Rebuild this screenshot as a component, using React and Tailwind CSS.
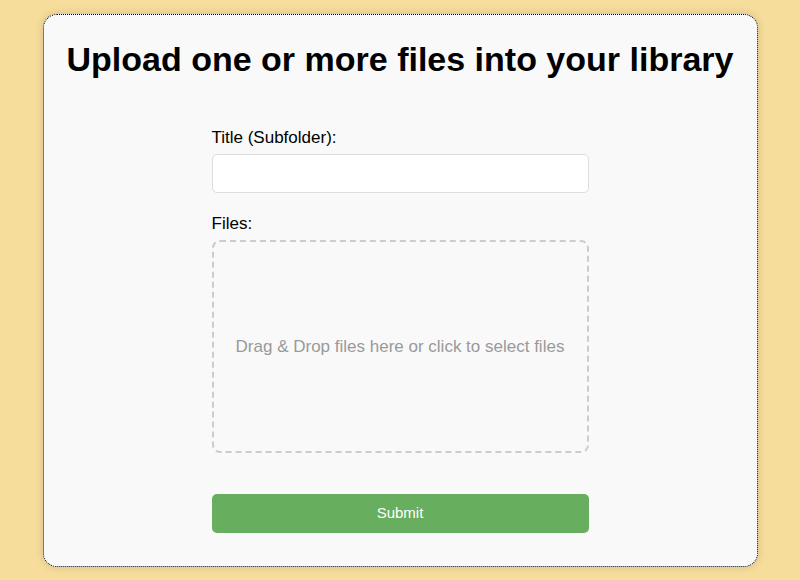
export default function App() {
  return (
    <div className="min-h-screen bg-[#f6dd9c] pt-[14px] font-['Liberation_Sans',Arial,sans-serif]">
      <div className="mx-auto w-[715px] h-[553px] rounded-[14px] border border-dotted border-black bg-[#f9f9f9] shadow-[0_0_8px_rgba(0,0,0,0.15)]">
        <h1 className="pt-[24px] text-center text-[34px] font-bold leading-[40px] text-black">
          Upload one or more files into your library
        </h1>

        <form className="mx-auto mt-[49px] w-[377px]" onSubmit={e => e.preventDefault()}>
          <label className="block text-[17px] leading-[20px] text-black">Title (Subfolder):</label>
          <input
            type="text"
            className="mt-[6px] block h-[39px] w-full rounded-[5px] border border-[#ddd] bg-white px-2 outline-none"
          />

          <label className="mt-[21px] block text-[17px] leading-[20px] text-black">Files:</label>
          <div className="mt-[6px] flex h-[213px] w-full items-center justify-center rounded-[8px] border-2 border-dashed border-[#ccc] bg-[#f9f9f9] text-[17px] text-[#999]">
            Drag &amp; Drop files here or click to select files
          </div>

          <button
            type="submit"
            className="mt-[41px] block h-[39px] w-full rounded-[5px] bg-[#67ae5e] text-[15px] text-white"
          >
            Submit
          </button>
        </form>
      </div>
    </div>
  );
}
